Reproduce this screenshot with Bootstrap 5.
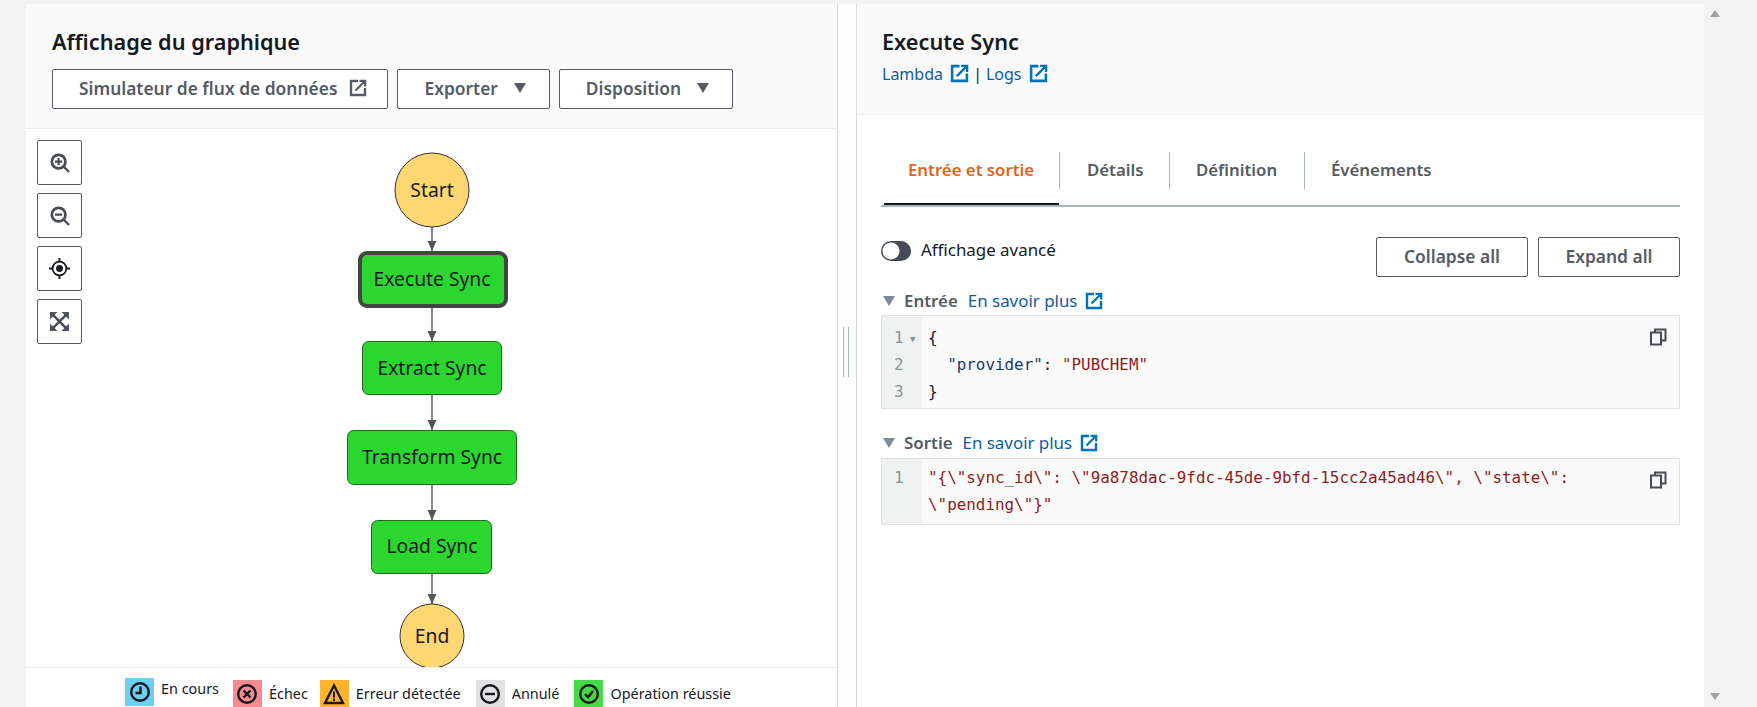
<!DOCTYPE html>
<html lang="fr">
  <head>
    <meta charset="UTF-8" />
    <meta name="viewport" content="width=device-width, initial-scale=1" />
    <title>Affichage du graphique</title>
    <link href="https://cdn.jsdelivr.net/npm/bootstrap@5.3.0/dist/css/bootstrap.min.css" rel="stylesheet" />
    <style>
      html, body { height: 100%; overflow: hidden; }
      body { background: #f3f3f3; color: #16191f; font-family: "Noto Sans", "Liberation Sans", sans-serif; font-size: 16px; }
      a { color: #0f5c9c; text-decoration: none; }
      .app-shell { height: 707px; padding: 4px 0 0 26px; }
      .graph-panel { width: 812px; background: #fff; border-right: 1px solid #d5dbdb; }
      .panel-head { background: #fafafa; border-bottom: 1px solid #eaeded; }
      .graph-panel .panel-head { height: 125px; padding: 26px 0 0 26px; }
      .detail-panel .panel-head { height: 111px; padding: 26px 0 0 25px; }
      .panel-title { font-size: 21.7px; line-height: 24px; font-weight: 600; margin: 0; color: #16191f; }
      .btn-aws { height: 40px; border: 1px solid #545b64; border-radius: 2px; background: #fff; color: #545b64; font-size: 17.4px; font-weight: 600; line-height: 22px; padding: 6px 23px 8px 26px; white-space: nowrap; }
      .btn-aws.has-link { padding-right: 20px; }
      .graph-tools { margin-top: 15px; gap: 9px; }
      .caret-down { display: inline-block; width: 0; height: 0; border-left: 6.5px solid transparent; border-right: 6.5px solid transparent; border-top: 10px solid #545b64; }
      .graph-canvas { height: 538px; }
      .graph-canvas > svg { display: block; }
      .node-label { font-family: "Noto Sans", "Liberation Sans", sans-serif; font-size: 19.3px; fill: #16191f; text-anchor: middle; }
      .zoom-stack { position: absolute; left: 11px; top: 11px; gap: 8px; }
      .tool-btn { width: 45px; height: 45px; border: 1px solid #545b64; border-radius: 2px; background: #fff; padding: 0; display: flex; align-items: center; justify-content: center; }
      .graph-legend { height: 40px; border-top: 1px solid #eaeded; padding-left: 99px; font-size: 14.4px; color: #16191f; overflow: hidden; }
      .legend-entry { display: flex; align-items: center; gap: 7px; margin-right: 15px; padding-top: 12px; }
      .legend-entry.is-raised { padding-top: 9px; margin-right: 14px; }
      .legend-entry.is-raised span { position: relative; top: -3px; }
      .legend-entry.is-tight { margin-right: 12px; }
      .legend-swatch { width: 29px; height: 28px; flex: none; display: flex; align-items: center; justify-content: center; }
      .swatch-blue { background: #6ccff0; }
      .swatch-red { background: #f68b8d; }
      .swatch-orange { background: #ffb32d; }
      .swatch-grey { background: #e2e2e2; }
      .swatch-green { background: #44db44; }
      .split-gap { width: 18px; background: #fcfcfc; }
      .split-grip { width: 6px; height: 50px; margin: -8px 0 0 -2px; border-left: 1px solid #aab7b8; border-right: 1px solid #aab7b8; }
      .detail-panel { width: 848px; background: #fff; border-left: 1px solid #d5dbdb; }
      .head-links { margin-top: 9px; font-size: 16px; line-height: 22px; }
      .head-links .link-bar { margin: 0 4px; }
      .detail-body { padding: 0 24px; }
      .run-tabs { margin-top: 36px; border-bottom: 2px solid #aab7b8; height: 56px; flex-wrap: nowrap; }
      .run-tabs .nav-item { position: relative; height: 54px; }
      .run-tabs .nav-link { color: #545b64; font-weight: 600; font-size: 16.8px; line-height: 22px; padding: 0 0 2px; margin-top: 1px; height: 37px; display: flex; align-items: center; border-left: 1px solid #aab7b8; }
      .run-tabs .nav-item:first-child .nav-link { border-left: 0; }
      .tab-a { width: 178px; }
      .run-tabs .tab-a .nav-link { color: #e0641c; padding-left: 27px; }
      .run-tabs .tab-a::after { content: ""; position: absolute; left: 3px; right: 0; bottom: 0; height: 2px; background: #16191f; }
      .tab-b { width: 110px; }
      .run-tabs .tab-b .nav-link { padding-left: 27px; }
      .tab-c { width: 135px; }
      .run-tabs .tab-c .nav-link { padding-left: 26px; }
      .run-tabs .tab-d .nav-link { padding-left: 26px; }
      .view-row { height: 40px; margin-top: 30px; }
      .form-switch .view-switch { width: 30px; height: 20px; margin: 0; float: none; background-color: #454c56; border: 0; background-position: left center; background-size: 20px 20px; background-image: url("data:image/svg+xml,%3csvg xmlns='http://www.w3.org/2000/svg' viewBox='-4 -4 8 8'%3e%3ccircle r='3.4' fill='%23fff'/%3e%3c/svg%3e"); }
      .view-label { font-size: 16.9px; line-height: 20px; color: #16191f; margin: -1px 0 0 10px; }
      .run-actions { gap: 10px; }
      .run-actions .btn-aws { width: 152px; padding: 6px 0 8px; }
      .run-actions .btn-aws + .btn-aws { width: 142px; }
      .io-head { font-size: 16.9px; line-height: 20px; gap: 10px; }
      .io-head strong { font-weight: 600; color: #545b64; }
      .io-caret { display: inline-block; width: 0; height: 0; border-left: 6.5px solid transparent; border-right: 6.5px solid transparent; border-top: 10px solid #7d8998; margin: 0 -1px 0 2px; }
      .io-one { margin-top: 14px; }
      .io-two { margin-top: 24px; }
      .code-box { margin-top: 5px; border: 1px solid #dfe3e3; background: #fafafa; position: relative; }
      .io-one + .code-box { margin-top: 4px; }
      .code-gutter { width: 40px; flex: none; background: #f0f1f1; color: #879596; padding: 8px 0 3px 12px; position: relative; }
      .code-text, .code-gutter { font-family: "DejaVu Sans Mono", "Liberation Mono", monospace; font-size: 15.9px; line-height: 27px; }
      .code-text { margin: 0; padding: 8px 0 3px 6px; color: #16191f; overflow: hidden; }
      .is-wrapped .code-gutter { padding: 5px 0 6px 12px; }
      .is-wrapped .code-text { padding: 5px 0 6px 6px; }
      .fold-mark { position: absolute; left: 28px; top: 10px; font-size: 9px; color: #879596; }
      .json-key { color: #1a3a6e; }
      .json-str, .code-text.json-str { color: #8f1d1d; }
      .copy-btn { position: absolute; right: 12px; top: 12px; border: 0; background: none; padding: 0; line-height: 0; }
      .page-rail { width: 53px; padding: 10px 0 7px 6px; margin-top: -4px; }
      .rail-up, .rail-down { display: block; width: 0; height: 0; border-left: 5px solid transparent; border-right: 5px solid transparent; }
      .rail-up { border-bottom: 7px solid #a4a4a4; }
      .rail-down { border-top: 7px solid #a4a4a4; }
      .ext-icon { vertical-align: -3px; margin-left: 3px; }
      .code-box .copy-btn svg { display: block; }
    </style>
  </head>
  <body>
    <svg width="0" height="0" class="position-absolute">
      <defs>
        <symbol id="ext" viewBox="0 0 18 18">
          <path d="M9 2H2v14h14V9" fill="none" stroke="currentColor" stroke-width="2.4" />
          <path d="M6.5 11.5 15 3M10.5 1.8h5.7v5.7" fill="none" stroke="currentColor" stroke-width="2.2" />
        </symbol>
        <symbol id="copy" viewBox="0 0 18 18">
          <path d="M6 4V1.5h10.5v11H13" fill="none" stroke="#454c56" stroke-width="2" />
          <rect x="2" y="4.5" width="10" height="12" fill="none" stroke="#454c56" stroke-width="2" />
        </symbol>
        <marker id="arrowhead" markerUnits="userSpaceOnUse" markerWidth="11" markerHeight="10" refX="10" refY="5" orient="auto">
          <path d="M0 .5 10 5 0 9.5Z" fill="#555" />
        </marker>
      </defs>
    </svg>

    <div class="app-shell d-flex">
      <!-- left: state machine graph -->
      <section class="graph-panel d-flex flex-column flex-shrink-0">
        <div class="panel-head">
          <h2 class="panel-title">Affichage du graphique</h2>
          <div class="graph-tools d-flex">
            <button type="button" class="btn btn-aws has-link d-flex align-items-center gap-2">
              Simulateur de flux de données
              <svg width="18" height="18" class="ms-1"><use href="#ext" /></svg>
            </button>
            <button type="button" class="btn btn-aws d-flex align-items-center gap-3">Exporter <span class="caret-down"></span></button>
            <button type="button" class="btn btn-aws d-flex align-items-center gap-3">Disposition <span class="caret-down"></span></button>
          </div>
        </div>

        <div class="graph-canvas position-relative overflow-hidden">
          <svg width="811" height="538" viewBox="26 129 811 538">
            <g stroke="#555" stroke-width="1.4" marker-end="url(#arrowhead)">
              <line x1="432" y1="227" x2="432" y2="251" />
              <line x1="432" y1="307" x2="432" y2="341" />
              <line x1="432" y1="395" x2="432" y2="430" />
              <line x1="432" y1="485" x2="432" y2="520" />
              <line x1="432" y1="574" x2="432" y2="604" />
            </g>
            <circle cx="432" cy="190" r="37" fill="#ffd772" stroke="#333" stroke-width="1" />
            <text class="node-label" x="432" y="197">Start</text>

            <rect x="360" y="253" width="146" height="53" rx="7" fill="#2bd62e" stroke="#444" stroke-width="4" />
            <text class="node-label" x="432" y="286">Execute Sync</text>

            <rect x="362.5" y="341.5" width="139" height="53" rx="6" fill="#2bd62e" stroke="#1c6b1c" stroke-width="1" />
            <text class="node-label" x="432" y="375">Extract Sync</text>

            <rect x="347.5" y="430.5" width="169" height="54" rx="6" fill="#2bd62e" stroke="#1c6b1c" stroke-width="1" />
            <text class="node-label" x="432" y="464">Transform Sync</text>

            <rect x="371.5" y="520.5" width="120" height="53" rx="6" fill="#2bd62e" stroke="#1c6b1c" stroke-width="1" />
            <text class="node-label" x="432" y="553">Load Sync</text>

            <circle cx="432" cy="636" r="32" fill="#ffd772" stroke="#333" stroke-width="1" />
            <text class="node-label" x="432" y="643">End</text>
          </svg>

          <div class="zoom-stack d-flex flex-column">
            <button type="button" class="tool-btn" aria-label="Zoom avant">
              <svg width="20" height="20" viewBox="0 0 22 22" fill="none" stroke="#454c56"><circle cx="9.5" cy="9.5" r="7.5" stroke-width="3" /><path d="M15 15l6 6M9.5 5.5v8M5.5 9.5h8" stroke-width="2.4" /></svg>
            </button>
            <button type="button" class="tool-btn" aria-label="Zoom arrière">
              <svg width="20" height="20" viewBox="0 0 22 22" fill="none" stroke="#454c56"><circle cx="9.5" cy="9.5" r="7.5" stroke-width="3" /><path d="M15 15l6 6M5.5 9.5h8" stroke-width="2.4" /></svg>
            </button>
            <button type="button" class="tool-btn" aria-label="Centrer">
              <svg width="21" height="21" viewBox="0 0 22 22" fill="none" stroke="#16191f"><circle cx="11" cy="11" r="7.2" stroke-width="1.8" /><circle cx="11" cy="11" r="3.6" fill="#16191f" stroke="none" /><path d="M11 0v4M11 18v4M0 11h4M18 11h4" stroke-width="2" /></svg>
            </button>
            <button type="button" class="tool-btn" aria-label="Ajuster">
              <svg width="19" height="19" viewBox="0 0 20 20" fill="none"><path d="M0 0h8L0 8ZM20 0h-8l8 8ZM0 20h8l-8-8ZM20 20h-8l8-8Z" fill="#545b64" /><path d="M1 1l18 18M19 1 1 19" stroke="#454c56" stroke-width="2.6" /></svg>
            </button>
          </div>
        </div>

        <div class="graph-legend d-flex">
          <div class="legend-entry is-raised">
            <div class="legend-swatch swatch-blue">
              <svg width="22" height="22" viewBox="0 0 22 22" fill="none" stroke="#16191f" stroke-width="2.4"><circle cx="11" cy="11" r="8.8" /><path d="M11.5 5.5V12H6.5" /></svg>
            </div>
            <span>En cours</span>
          </div>
          <div class="legend-entry is-tight">
            <div class="legend-swatch swatch-red">
              <svg width="22" height="22" viewBox="0 0 22 22" fill="none" stroke="#16191f" stroke-width="2.4"><circle cx="11" cy="11" r="8.8" /><path d="M7.5 7.5l7 7M14.5 7.5l-7 7" /></svg>
            </div>
            <span>Échec</span>
          </div>
          <div class="legend-entry">
            <div class="legend-swatch swatch-orange">
              <svg width="22" height="22" viewBox="0 0 22 22" fill="none" stroke="#16191f" stroke-width="2.4"><path d="M11 2.5 20 20H2Z" /><path d="M11 8.5v6M11 15.5v2.5" stroke-width="2" /></svg>
            </div>
            <span>Erreur détectée</span>
          </div>
          <div class="legend-entry">
            <div class="legend-swatch swatch-grey">
              <svg width="22" height="22" viewBox="0 0 22 22" fill="none" stroke="#16191f" stroke-width="2.4"><circle cx="11" cy="11" r="8.8" /><path d="M6 11h10" /></svg>
            </div>
            <span>Annulé</span>
          </div>
          <div class="legend-entry">
            <div class="legend-swatch swatch-green">
              <svg width="22" height="22" viewBox="0 0 22 22" fill="none" stroke="#16191f" stroke-width="2.4"><circle cx="11" cy="11" r="8.8" /><path d="M7 11l3 3.2L15 8" /></svg>
            </div>
            <span>Opération réussie</span>
          </div>
        </div>
      </section>

      <div class="split-gap d-flex align-items-center justify-content-center flex-shrink-0">
        <div class="split-grip"></div>
      </div>

      <!-- right: selected step -->
      <section class="detail-panel flex-shrink-0">
        <div class="panel-head">
          <h2 class="panel-title">Execute Sync</h2>
          <div class="head-links">
            <a href="#">Lambda <svg class="ext-icon" width="19" height="19" color="#0073bb"><use href="#ext" /></svg></a><span class="link-bar">|</span><a href="#">Logs <svg class="ext-icon" width="19" height="19" color="#0073bb"><use href="#ext" /></svg></a>
          </div>
        </div>

        <div class="detail-body">
          <ul class="nav run-tabs">
            <li class="nav-item tab-a"><a class="nav-link" href="#">Entrée et sortie</a></li>
            <li class="nav-item tab-b"><a class="nav-link" href="#">Détails</a></li>
            <li class="nav-item tab-c"><a class="nav-link" href="#">Définition</a></li>
            <li class="nav-item tab-d"><a class="nav-link" href="#">Événements</a></li>
          </ul>

          <div class="view-row d-flex justify-content-between">
            <div class="form-check form-switch d-flex align-items-start p-0 m-0 pt-1 mt-n1">
              <input class="form-check-input view-switch" type="checkbox" role="switch" id="advancedView" />
              <label class="view-label" for="advancedView">Affichage avancé</label>
            </div>
            <div class="run-actions d-flex">
              <button type="button" class="btn btn-aws">Collapse all</button>
              <button type="button" class="btn btn-aws">Expand all</button>
            </div>
          </div>

          <div class="io-head io-one d-flex align-items-center">
            <span class="io-caret"></span><strong>Entrée</strong>
            <a href="#">En savoir plus <svg class="ext-icon" width="18" height="18" color="#0073bb"><use href="#ext" /></svg></a>
          </div>
          <div class="code-box d-flex">
            <div class="code-gutter">1<br />2<br />3<span class="fold-mark">▼</span></div>
            <pre class="code-text">{
  <span class="json-key">"provider"</span>: <span class="json-str">"PUBCHEM"</span>
}</pre>
            <button type="button" class="copy-btn" aria-label="Copier"><svg width="18" height="18"><use href="#copy" /></svg></button>
          </div>

          <div class="io-head io-two d-flex align-items-center">
            <span class="io-caret"></span><strong>Sortie</strong>
            <a href="#">En savoir plus <svg class="ext-icon" width="18" height="18" color="#0073bb"><use href="#ext" /></svg></a>
          </div>
          <div class="code-box is-wrapped d-flex">
            <div class="code-gutter">1</div>
            <pre class="code-text json-str">"{\"sync_id\": \"9a878dac-9fdc-45de-9bfd-15cc2a45ad46\", \"state\":
\"pending\"}"</pre>
            <button type="button" class="copy-btn" aria-label="Copier"><svg width="18" height="18"><use href="#copy" /></svg></button>
          </div>
        </div>
      </section>

      <div class="page-rail d-flex flex-column justify-content-between flex-shrink-0">
        <span class="rail-up"></span>
        <span class="rail-down"></span>
      </div>
    </div>
  </body>
</html>
